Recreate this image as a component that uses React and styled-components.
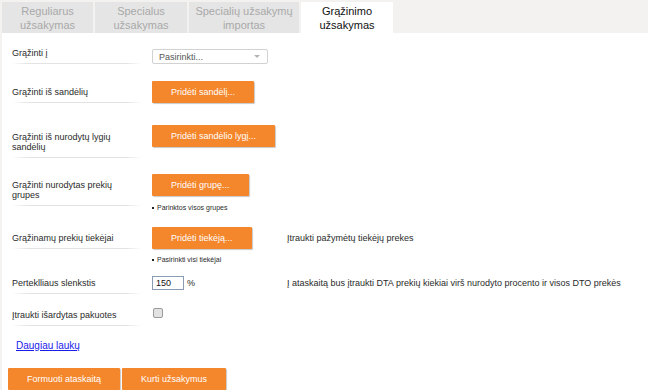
import React from "react";
import styled, { createGlobalStyle } from "styled-components";

const GlobalStyle = createGlobalStyle`
  html, body { margin: 0; padding: 0; }
  body {
    background: #f3f2f1;
    font-family: "Liberation Sans", Arial, sans-serif;
    color: #2a2a2a;
    width: 648px;
    height: 390px;
    overflow: hidden;
  }
`;

const Page = styled.div`
  display: flex;
  flex-direction: column;
  height: 390px;
`;

const TabBar = styled.div`
  display: flex;
  gap: 2px;
  padding: 2px 0 0 2px;
  height: 31px;
  flex-shrink: 0;
`;

const Tab = styled.div`
  width: ${(p) => p.$w}px;
  height: 31px;
  display: flex;
  align-items: center;
  justify-content: center;
  text-align: center;
  font-size: 11px;
  line-height: 14px;
  padding-top: 1px;
  box-sizing: border-box;
  background: ${(p) => (p.$active ? "#ffffff" : "#e5e5e5")};
  color: ${(p) => (p.$active ? "#111" : "#a9a9a9")};
`;

const Panel = styled.div`
  flex: 1;
  background: #fff;
  margin-left: 2px;
  padding: 14px 0 0 6px;
  overflow: hidden;
`;

const Form = styled.div`
  display: flex;
  flex-direction: column;
  margin-left: 4px;
`;

const Row = styled.div`
  display: flex;
  align-items: flex-start;
  height: ${(p) => p.$h}px;
`;

const Label = styled.div`
  width: 130px;
  margin-top: ${(p) => p.$mt || 0}px;
  font-size: 9px;
  line-height: 10px;
  padding-bottom: 6px;
  color: #2a2a2a;
  background: linear-gradient(
      to right,
      rgba(225, 225, 225, 0),
      #e3e3e3 12%,
      #e3e3e3 88%,
      rgba(225, 225, 225, 0)
    )
    bottom / 100% 1px no-repeat;
`;

const Controls = styled.div`
  width: 135px;
  margin-left: 10px;
  display: flex;
  flex-direction: column;
  align-items: flex-start;
  flex-shrink: 0;
`;

const Inline = styled.div`
  display: flex;
  align-items: center;
  gap: 3px;
  margin-top: ${(p) => p.$mt || 0}px;
`;

const Aside = styled.div`
  margin-top: ${(p) => p.$mt || 0}px;
  font-size: 9px;
  line-height: 10px;
  color: #2a2a2a;
  white-space: nowrap;
`;

const Select = styled.div`
  margin-top: ${(p) => p.$mt || 0}px;
  width: 116px;
  height: 15px;
  box-sizing: border-box;
  border: 1px solid #d2d2d2;
  border-radius: 2px;
  display: flex;
  align-items: center;
  justify-content: space-between;
  padding: 0 7px 0 6px;
  font-size: 9px;
  color: #555;
`;

const Caret = styled.span`
  width: 0;
  height: 0;
  border-left: 3px solid transparent;
  border-right: 3px solid transparent;
  border-top: 3px solid #b5b5b5;
`;

const Button = styled.button`
  height: 22px;
  padding: 0 19px;
  border: none;
  border-radius: 1px;
  background: #f4862b;
  color: #fff;
  font-family: "Liberation Sans", Arial, sans-serif;
  font-size: 9px;
  box-shadow: 1px 1px 1px rgba(0, 0, 0, 0.22);
  white-space: nowrap;
  cursor: pointer;
`;

const Note = styled.div`
  margin-top: ${(p) => p.$mt || 0}px;
  font-size: 7px;
  line-height: 10px;
  color: #2a2a2a;
  display: flex;
  align-items: center;
  gap: 3px;
  &::before {
    content: "";
    width: 2px;
    height: 2px;
    background: #222;
  }
`;

const NumberBox = styled.div`
  width: 32px;
  height: 14px;
  box-sizing: border-box;
  border: 1px solid #8a9cb3;
  font-size: 9px;
  line-height: 12px;
  padding-left: 3px;
  color: #111;
`;

const Unit = styled.span`
  font-size: 9px;
  color: #2a2a2a;
`;

const Check = styled.div`
  width: 8px;
  height: 8px;
  margin: 1px 0 0 1px;
  border: 1px solid #9a9a9a;
  border-radius: 2px;
  background: #e2e2e2;
`;

const MoreLink = styled.a`
  display: block;
  margin: 0 0 16px 8px;
  font-size: 10px;
  line-height: 12px;
  color: #1b1bea;
  text-decoration: underline;
  width: max-content;
`;

const ActionBar = styled.div`
  display: flex;
  gap: 2px;
`;

export default function App() {
  return (
    <>
      <GlobalStyle />
      <Page>
        <TabBar>
          <Tab $w={91}>Reguliarus<br />užsakymas</Tab>
          <Tab $w={92}>Specialus<br />užsakymas</Tab>
          <Tab $w={110}>Specialių užsakymų<br />importas</Tab>
          <Tab $w={92} $active>Grąžinimo<br />užsakymas</Tab>
        </TabBar>
        <Panel>
          <Form>
            <Row $h={34}>
              <Label $mt={1}>Grąžinti į</Label>
              <Controls>
                <Select $mt={2}>
                  <span>Pasirinkti...</span>
                  <Caret />
                </Select>
              </Controls>
            </Row>
            <Row $h={44}>
              <Label $mt={6}>Grąžinti iš sandėlių</Label>
              <Controls>
                <Button>Pridėti sandėlį...</Button>
              </Controls>
            </Row>
            <Row $h={49}>
              <Label $mt={7}>Grąžinti iš nurodytų lygių<br />sandėlių</Label>
              <Controls>
                <Button>Pridėti sandėlio lygį...</Button>
              </Controls>
            </Row>
            <Row $h={53}>
              <Label $mt={6}>Grąžinti nurodytas prekių<br />grupes</Label>
              <Controls>
                <Button>Pridėti grupę...</Button>
                <Note $mt={7}>Parinktos visos grupes</Note>
              </Controls>
            </Row>
            <Row $h={49}>
              <Label $mt={6}>Grąžinamų prekių tiekėjai</Label>
              <Controls>
                <Button>Pridėti tiekėją...</Button>
                <Note $mt={6}>Pasirinkti visi tiekėjai</Note>
              </Controls>
              <Aside $mt={6}>Įtraukti pažymėtų tiekėjų prekes</Aside>
            </Row>
            <Row $h={31}>
              <Label $mt={2}>Perteklliaus slenkstis</Label>
              <Controls>
                <Inline>
                  <NumberBox>150</NumberBox>
                  <Unit>%</Unit>
                </Inline>
              </Controls>
              <Aside $mt={2}>
                Į ataskaitą bus įtraukti DTA prekių kiekiai virš nurodyto procento ir visos DTO prekės
              </Aside>
            </Row>
            <Row $h={33}>
              <Label $mt={3}>Įtraukti išardytas pakuotes</Label>
              <Controls>
                <Check />
              </Controls>
            </Row>
          </Form>
          <MoreLink href="#">Daugiau laukų</MoreLink>
          <ActionBar>
            <Button>Formuoti ataskaitą</Button>
            <Button>Kurti užsakymus</Button>
          </ActionBar>
        </Panel>
      </Page>
    </>
  );
}
